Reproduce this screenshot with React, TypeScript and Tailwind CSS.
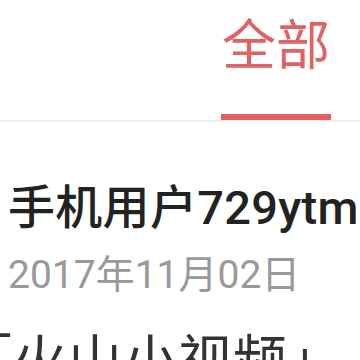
export default function App() {
  const cjk = { fontFamily: 'Roboto, "Noto Sans CJK SC", sans-serif' };
  return (
    <div className="w-[360px] h-[360px] overflow-hidden bg-white" style={cjk}>
      {/* tab bar */}
      <div className="flex justify-end border-b-2 border-[#f0f0f0] pr-[29px]">
        <div className="flex w-[110px] flex-col items-center">
          <span className="mt-[12px] text-[54px] leading-[70px] text-[#e06262]">全部</span>
          <span className="mt-[32px] h-[6px] w-full bg-[#e06262]" />
        </div>
      </div>

      {/* post */}
      <div className="pl-[8px] pt-[58px]">
        <p className="whitespace-nowrap text-[47px] font-medium leading-[56px] tracking-[0.3px] text-[#222]">手机用户729ytm</p>
        <p className="mt-[16px] whitespace-nowrap text-[39px] leading-[46px] text-[#999]">2017年11月02日</p>
        <p className="-ml-[50px] mt-[32px] whitespace-nowrap text-[54px] leading-[64px] tracking-[1px] text-[#333]">「火山小视频」</p>
      </div>
    </div>
  );
}
